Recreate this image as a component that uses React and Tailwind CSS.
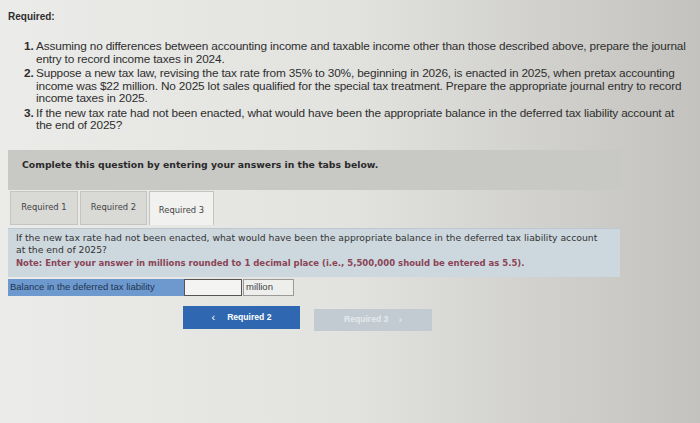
export default function App() {
  const items = [
    'Assuming no differences between accounting income and taxable income other than those described above, prepare the journal entry to record income taxes in 2024.',
    'Suppose a new tax law, revising the tax rate from 35% to 30%, beginning in 2026, is enacted in 2025, when pretax accounting income was $22 million. No 2025 lot sales qualified for the special tax treatment. Prepare the appropriate journal entry to record income taxes in 2025.',
    'If the new tax rate had not been enacted, what would have been the appropriate balance in the deferred tax liability account at the end of 2025?',
  ]

  return (
    <div className="w-[700px] h-[423px] overflow-hidden bg-linear-to-r from-[#ebebe9] via-[#e2e2df] to-[#c3c2be] text-[#2e2e2e]">
      <div className="pt-[11px] pl-[8px] font-['Liberation_Sans',sans-serif]">
        <p className="text-[10px] font-bold leading-[12px]">Required:</p>
        <ol className="mt-[17px] pl-[16px] pr-[8px] space-y-[2px]">
          {items.map((t, i) => (
            <li key={i} className="flex text-[11.8px] leading-[12.5px] tracking-[-0.15px]">
              <span className="w-[12px] shrink-0 font-bold">{i + 1}.</span>
              <span>{t}</span>
            </li>
          ))}
        </ol>
      </div>

      <div className="font-['DejaVu_Sans',sans-serif]">
        <div className="ml-[8px] mt-[18px] w-[614px] h-[40px] bg-[#c8c8c5] pl-[14px] pt-[9px]">
          <p className="text-[9.3px] font-bold leading-[12px] text-[#2a2a2a]">
            Complete this question by entering your answers in the tabs below.
          </p>
        </div>

        <div className="ml-[10px] mt-[1px] flex items-end gap-[2px] text-[8.4px] text-[#444]">
          <div className="w-[68px] h-[34px] bg-[#d9d9d6] border border-[#c4c4c1] flex items-center justify-center">
            Required 1
          </div>
          <div className="w-[67px] h-[34px] bg-[#d9d9d6] border border-[#c4c4c1] flex items-center justify-center">
            Required 2
          </div>
          <div className="w-[65px] h-[34px] bg-[#f1f1ef] border border-[#c4c4c1] border-b-0 flex items-center justify-center pt-[4px]">
            Required 3
          </div>
        </div>

        <div className="ml-[8px] mt-[3px] w-[612px] h-[49px] bg-[#cdd7de] border-t border-[#bcc7cf] pl-[8px] pr-[12px] pt-[3px] text-[9.25px] leading-[12px]">
          <p className="text-[#333]">
            If the new tax rate had not been enacted, what would have been the appropriate balance in the deferred tax liability account
            at the end of 2025?
          </p>
          <p className="mt-[1px] text-[8.5px] font-bold text-[#8a4456]">
            Note: Enter your answer in millions rounded to 1 decimal place (i.e., 5,500,000 should be entered as 5.5).
          </p>
        </div>

        <div className="ml-[8px] mt-[2px] flex h-[17px] font-['Liberation_Sans',sans-serif] text-[9.5px]">
          <div className="w-[176px] bg-[#6d99cf] text-[#1f3550] pl-[2px] flex items-center">
            Balance in the deferred tax liability
          </div>
          <div className="w-[58px] bg-[#f4f4f2] border border-[#555]"></div>
          <div className="w-[51px] ml-[1px] bg-[#eeeeec] border border-[#9a9a98] pl-[2px] flex items-center text-[#444]">
            million
          </div>
        </div>

        <div className="ml-[183px] mt-[10px] flex items-start gap-[14px] font-['Liberation_Sans',sans-serif] text-[8.6px] font-bold">
          <button className="w-[117px] h-[23px] bg-[#2f67b0] text-white flex items-center justify-center gap-[12px]">
            <span className="text-[11px] font-normal">&lsaquo;</span>
            <span>Required 2</span>
          </button>
          <button className="mt-[3px] w-[118px] h-[22px] bg-[#c2cbd2] text-[#e4e9ed] flex items-center justify-center gap-[10px]">
            <span>Required 3</span>
            <span className="text-[11px] font-normal">&rsaquo;</span>
          </button>
        </div>
      </div>
    </div>
  )
}
